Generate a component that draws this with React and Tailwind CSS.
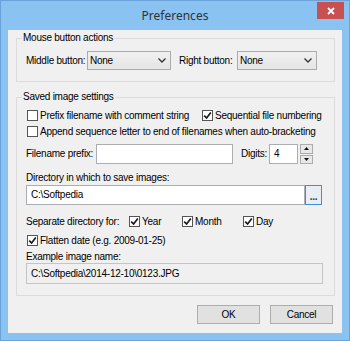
import React from "react";

const font = { fontFamily: '"Liberation Sans", Arial, sans-serif' };

function Check({ checked }) {
  return (
    <span className="w-[11px] h-[11px] border border-[#555555] bg-white flex items-center justify-center shrink-0">
      {checked && (
        <svg width="9" height="9" viewBox="0 0 9 9">
          <path d="M1.2 4.6 L3.6 7 L7.8 1.6" fill="none" stroke="#1a1a1a" strokeWidth="1.7" />
        </svg>
      )}
    </span>
  );
}

function CheckItem({ checked, label, className = "" }) {
  return (
    <div className={"flex items-center h-[13px] " + className}>
      <Check checked={checked} />
      <span className="ml-[2px] whitespace-nowrap">{label}</span>
    </div>
  );
}

function Combo({ w }) {
  return (
    <div className={"h-[19px] border border-[#acacac] bg-gradient-to-b from-[#f0f0f0] to-[#e5e5e5] flex items-center pl-[2px] pr-[4px] " + w}>
      <span className="flex-1">None</span>
      <svg width="8" height="5" viewBox="0 0 8 5">
        <path d="M0.5 0.5 L4 4 L7.5 0.5" fill="none" stroke="#333" strokeWidth="1.3" />
      </svg>
    </div>
  );
}

function Group({ title, className = "", children }) {
  return (
    <div className={"relative border border-[#dcdcdc] w-[319px] ml-[8px] " + className}>
      <span className="absolute -top-[7px] left-[5px] px-[1px] bg-[#f0f0f0] leading-[12px] whitespace-nowrap">{title}</span>
      {children}
    </div>
  );
}

export default function App() {
  return (
    <div className="w-[350px] h-[341px] bg-[#8ac2f2] border border-[#6aa3d9] flex flex-col relative text-[10px] leading-[12px] text-black tracking-[-0.25px]" style={font}>
      <div className="h-[29px] flex items-center justify-center">
        <span className="text-[12px] text-[#333] tracking-normal" style={{ fontFamily: '"Noto Sans", "Open Sans", sans-serif' }}>Preferences</span>
      </div>
      <div className="absolute top-[1px] left-[316px] w-[27px] h-[17px] bg-[#c75050] flex items-center justify-center">
        <svg width="8" height="8" viewBox="0 0 8 8">
          <path d="M1 1 L7 7 M7 1 L1 7" stroke="#fff" strokeWidth="1.8" />
        </svg>
      </div>
      <div className="mx-[7px] mb-[7px] flex-1 bg-[#f0f0f0] flex flex-col">
        <Group title="Mouse button actions" className="mt-[8px] h-[44px] pt-[12px] pl-[9px]">
          <div className="flex items-center h-[19px]">
            <span className="w-[61px] whitespace-nowrap">Middle button:</span>
            <Combo w="w-[84px]" />
            <span className="w-[58px] ml-[8px] whitespace-nowrap">Right button:</span>
            <Combo w="w-[80px]" />
          </div>
        </Group>

        <Group title="Saved image settings" className="mt-[15px] h-[199px] pt-[11px] pl-[9px] flex flex-col">
          <div className="flex items-center">
            <CheckItem label="Prefix filename with comment string" className="w-[176px] pl-[1px]" />
            <CheckItem checked label="Sequential file numbering" />
          </div>
          <CheckItem label="Append sequence letter to end of filenames when auto-bracketing" className="mt-[3px] pl-[1px]" />
          <div className="flex items-center mt-[6px] h-[20px]">
            <span className="w-[70px] whitespace-nowrap">Filename prefix:</span>
            <div className="w-[137px] h-[20px] border border-[#abadb3] bg-white" />
            <span className="ml-[8px] w-[28px]">Digits:</span>
            <div className="w-[29px] h-[20px] border border-[#abadb3] bg-white flex items-center pl-[4px]">4</div>
            <div className="ml-[2px] w-[13px] h-[20px] flex flex-col gap-[1px]">
              <div className="flex-1 border border-[#acacac] bg-[#e8e8e8] flex items-center justify-center">
                <svg width="5" height="3" viewBox="0 0 5 3"><path d="M0 3 L2.5 0 L5 3 Z" fill="#111" /></svg>
              </div>
              <div className="flex-1 border border-[#acacac] bg-[#e8e8e8] flex items-center justify-center">
                <svg width="5" height="3" viewBox="0 0 5 3"><path d="M0 0 L2.5 3 L5 0 Z" fill="#111" /></svg>
              </div>
            </div>
          </div>
          <div className="mt-[8px] h-[12px]">Directory in which to save images:</div>
          <div className="mt-[1px] flex h-[20px]">
            <div className="w-[279px] h-[20px] border border-[#abadb3] bg-white flex items-center pl-[4px]">C:\Softpedia</div>
            <div className="w-[17px] h-[20px] border border-[#3c8ee0] bg-[#e8eef4] flex items-end justify-center pb-[4px] leading-[6px] text-[10px] font-bold text-[#333]">...</div>
          </div>
          <div className="mt-[10px] flex items-center h-[13px]">
            <span className="w-[103px] whitespace-nowrap">Separate directory for:</span>
            <CheckItem checked label="Year" className="w-[53px]" />
            <CheckItem checked label="Month" className="w-[61px]" />
            <CheckItem checked label="Day" />
          </div>
          <CheckItem checked label="Flatten date (e.g. 2009-01-25)" className="mt-[6px] pl-[1px]" />
          <div className="mt-[4px] h-[12px]">Example image name:</div>
          <div className="w-[297px] h-[21px] border border-[#c4c4c4] bg-[#f0f0f0] flex items-center pl-[4px]">C:\Softpedia\2014-12-10\0123.JPG</div>
        </Group>

        <div className="mt-[9px] flex justify-end pr-[9px] gap-[10px]">
          <div className="w-[63px] h-[19px] border border-[#adadad] bg-[#e1e1e1] flex items-center justify-center">OK</div>
          <div className="w-[63px] h-[19px] border border-[#adadad] bg-[#e1e1e1] flex items-center justify-center">Cancel</div>
        </div>
      </div>
    </div>
  );
}
